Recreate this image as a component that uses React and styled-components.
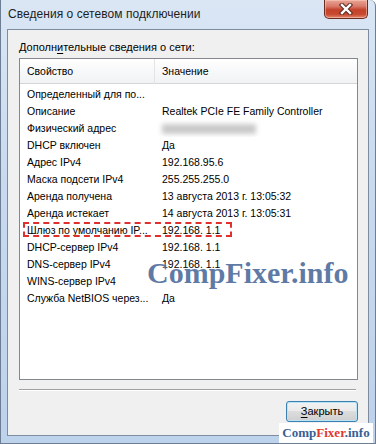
import React from "react";
import styled, { createGlobalStyle } from "styled-components";

const Global = createGlobalStyle`
  body { margin: 0; background: #fff; }
`;

// строки списка: свойство, значение
const rows = [
  { name: "Определенный для по...", value: "" },
  { name: "Описание", value: "Realtek PCIe FE Family Controller" },
  { name: "Физический адрес", value: null },
  { name: "DHCP включен", value: "Да" },
  { name: "Адрес IPv4", value: "192.168.95.6" },
  { name: "Маска подсети IPv4", value: "255.255.255.0" },
  { name: "Аренда получена", value: "13 августа 2013 г. 13:05:32" },
  { name: "Аренда истекает", value: "14 августа 2013 г. 13:05:31" },
  { name: "Шлюз по умолчанию IP...", value: "192.168. 1.1", marked: true },
  { name: "DHCP-сервер IPv4", value: "192.168. 1.1" },
  { name: "DNS-сервер IPv4", value: "192.168. 1.1" },
  { name: "WINS-сервер IPv4", value: "" },
  { name: "Служба NetBIOS через...", value: "Да" },
];

const CloseIcon = () => (
  <svg width="16" height="12" viewBox="0 0 16 12">
    <path d="M4 2 L12 10 M12 2 L4 10" stroke="#5a2a22" strokeWidth="4.4" strokeLinecap="square" />
    <path d="M4 2 L12 10 M12 2 L4 10" stroke="#fff" strokeWidth="2.4" strokeLinecap="square" />
  </svg>
);

const App = () => {
  return (
    <>
      <Global />
      <Window>
        <TitleBar>
          <Title>Сведения о сетевом подключении</Title>
          <CloseButton>
            <CloseIcon />
          </CloseButton>
        </TitleBar>
        <Client>
          <Label>
            Дополн<u>и</u>тельные сведения о сети:
          </Label>
          <ListBox>
            <Header>
              <HeadCell $first>Свойство</HeadCell>
              <HeadCell>Значение</HeadCell>
            </Header>
            <Rows>
              {rows.map((r, idx) => (
                <Row key={idx} $marked={r.marked}>
                  <Cell>{r.name}</Cell>
                  <Cell>{r.value === null ? <Blur /> : r.value}</Cell>
                </Row>
              ))}
            </Rows>
          </ListBox>
          <Separator />
          <Footer>
            <Button>
              <u>З</u>акрыть
            </Button>
          </Footer>
        </Client>
        <BigMark>CompFixer.info</BigMark>
        <SmallMark>
          <Blue>Comp</Blue>
          <Red>Fixer</Red>
          <Blue>.info</Blue>
        </SmallMark>
      </Window>
    </>
  );
};

const Window = styled.div`
  position: relative;
  width: 376px;
  height: 444px;
  box-sizing: border-box;
  overflow: hidden;
  background: linear-gradient(to bottom, #dae6f4 0%, #c9daef 40%, #bdd2eb 100%);
  border-left: 1px solid #6d7d93;
  border-right: 1px solid #6d7d93;
  border-bottom: 1px solid #6d7d93;
  border-top-right-radius: 6px;
  display: flex;
  flex-direction: column;
`;

const TitleBar = styled.div`
  height: 29px;
  display: flex;
  align-items: flex-start;
  padding-left: 7px;
`;

const Title = styled.div`
  font-family: "Liberation Sans", "Noto Sans", sans-serif;
  font-size: 12px;
  color: #1e1e1e;
  margin-top: 7px;
  letter-spacing: 0.05px;
`;

const CloseButton = styled.div`
  margin-left: auto;
  margin-right: 7px;
  width: 44px;
  height: 19px;
  box-sizing: border-box;
  border: 1px solid #6a2b20;
  border-top: none;
  border-radius: 0 0 5px 5px;
  background: linear-gradient(
    to bottom,
    #e8a695 0%,
    #d9796a 35%,
    #c2412a 55%,
    #c94a30 80%,
    #e08870 100%
  );
  box-shadow: inset 0 0 0 1px rgba(255, 210, 200, 0.5);
  display: flex;
  align-items: center;
  justify-content: center;
`;

const Client = styled.div`
  margin: 0 6px 7px 6px;
  flex: 1;
  background: #f0f0f0;
  border: 1px solid #7e8ca0;
  display: flex;
  flex-direction: column;
  padding: 10px 10px 0 11px;
  font-family: "Liberation Sans", "Noto Sans", sans-serif;
  font-size: 10.5px;
  color: #000;
`;

const Label = styled.div`
  height: 17px;
  line-height: 14px;
  font-size: 11px;
  margin-bottom: 1px;
  u { text-decoration-thickness: 1px; text-underline-offset: 2px; }
`;

const ListBox = styled.div`
  height: 322px;
  box-sizing: border-box;
  border: 1px solid #828790;
  background: #fff;
`;

const Header = styled.div`
  height: 24px;
  display: grid;
  grid-template-columns: 135px 1fr;
  background: linear-gradient(to bottom, #ffffff 0%, #f7f8f9 50%, #f1f2f3 100%);
  border-bottom: 1px solid #d5d5d5;
`;

const HeadCell = styled.div`
  padding-left: 7px;
  line-height: 25px;
  border-right: ${(p) => (p.$first ? "1px solid #e3e4e6" : "none")};
`;

const Rows = styled.div`
  padding-top: 2px;
`;

const Row = styled.div`
  position: relative;
  height: 17px;
  line-height: 17px;
  display: grid;
  grid-template-columns: 135px 1fr;
  white-space: nowrap;

  ${(p) =>
    p.$marked &&
    `
    &::after {
      content: "";
      position: absolute;
      left: 3px;
      top: 0px;
      width: 209px;
      height: 15px;
      box-sizing: border-box;
      border: 2px dashed #e0302e;
    }
  `}
`;

const Cell = styled.div`
  padding-left: 7px;
  overflow: hidden;
`;

const Blur = styled.span`
  display: inline-block;
  width: 94px;
  height: 10px;
  margin-top: 4px;
  background: #c9c9c9;
  filter: blur(2.5px);
  vertical-align: top;
`;

const Separator = styled.div`
  margin: 9px 2px 0 0;
  height: 1px;
  background: #a0a0a0;
  border-bottom: 1px solid #fff;
`;

const Footer = styled.div`
  display: flex;
  justify-content: flex-end;
  margin-top: 10px;
`;

const Button = styled.div`
  width: 72px;
  height: 21px;
  box-sizing: border-box;
  border: 1px solid #3c7fb1;
  border-radius: 3px;
  background: linear-gradient(to bottom, #f2f2f2 0%, #ebebeb 45%, #dddddd 50%, #cfcfcf 100%);
  box-shadow: inset 0 0 0 1px #b8e4f7;
  text-align: center;
  line-height: 19px;
  font-size: 11px;
  u { text-underline-offset: 2px; }
`;

const BigMark = styled.div`
  position: absolute;
  left: 146px;
  top: 258px;
  font-family: "Liberation Serif", "DejaVu Serif", serif;
  font-weight: bold;
  font-size: 30px;
  line-height: 30px;
  color: rgba(58, 92, 145, 0.82);
  text-shadow: 0 0 2px rgba(255, 255, 255, 0.8);
`;

const SmallMark = styled.div`
  position: absolute;
  left: 278px;
  top: 423px;
  width: 94px;
  height: 20px;
  background: #fff;
  font-family: "Liberation Serif", "DejaVu Serif", serif;
  font-weight: bold;
  font-size: 13px;
  line-height: 20px;
  text-align: center;
`;

const Blue = styled.span`
  color: #3b5f94;
`;

const Red = styled.span`
  color: #e0392b;
`;

export default App;
